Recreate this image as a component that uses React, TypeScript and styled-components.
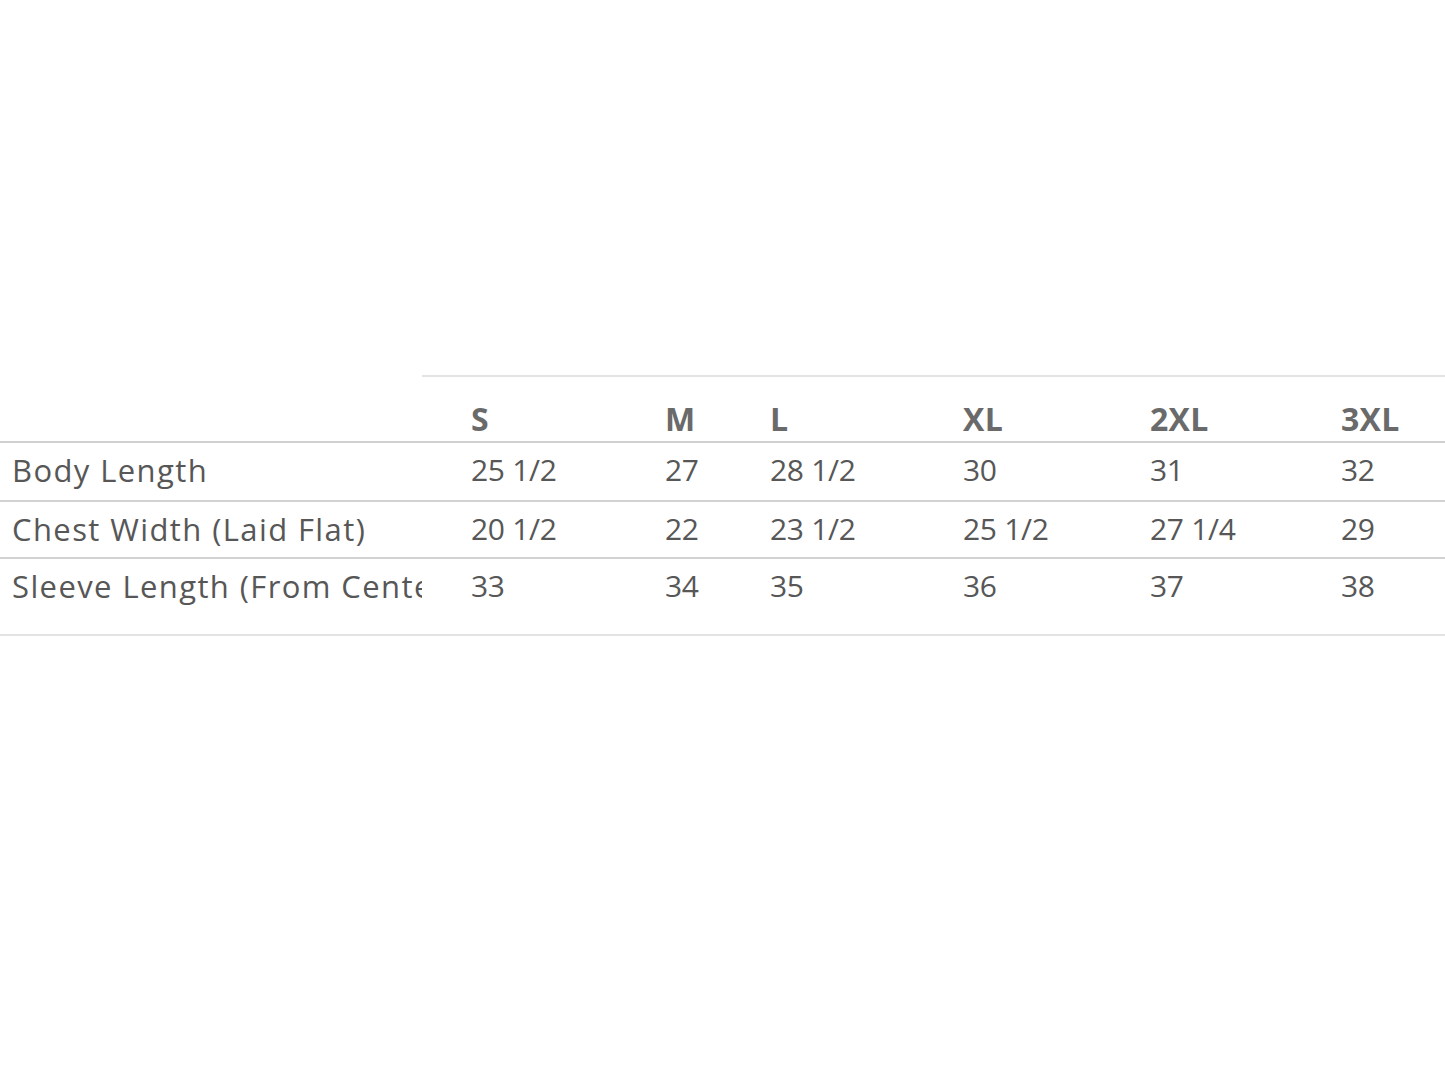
import React from "react";
import styled, { createGlobalStyle } from "styled-components";

const Global = createGlobalStyle`
  html, body { margin: 0; padding: 0; background: #ffffff; }
  body { font-family: "Open Sans", "Liberation Sans", sans-serif; }
`;

const Page = styled.main`
  width: 1445px;
  padding-top: 375px;
`;

const Table = styled.table`
  width: 1445px;
  border-collapse: collapse;
  table-layout: fixed;
  color: #575757;
`;

const HeadRow = styled.tr`
  height: 66px;
`;

const HeadCell = styled.th<{ $blank?: boolean }>`
  padding: 25px 0 0 49px;
  text-align: left;
  vertical-align: top;
  font-weight: 700;
  font-size: 32px;
  line-height: 34px;
  letter-spacing: 0.3px;
  color: #6a6a6a;
  border-top: ${(p) => (p.$blank ? "none" : "2px solid #e4e4e4")};
  border-bottom: 2px solid #d0d0d0;
`;

const Row = styled.tr<{ $h: number; $last?: boolean }>`
  height: ${(p) => p.$h}px;
  border-bottom: ${(p) => (p.$last ? "2px solid #e2e2e2" : "2px solid #d2d2d2")};
`;

const Label = styled.td`
  padding: 10px 0 0 12px;
  vertical-align: top;
  font-size: 31px;
  line-height: 34px;
  letter-spacing: 1.4px;
  white-space: nowrap;
  overflow: hidden;
`;

const Value = styled.td`
  padding: 10px 0 0 49px;
  vertical-align: top;
  font-size: 30px;
  line-height: 34px;
  letter-spacing: -0.3px;
  white-space: nowrap;
`;

const widths = [422, 194, 105, 193, 187, 191, 153];
const sizes = ["S", "M", "L", "XL", "2XL", "3XL"];
const rows: { label: string; h: number; values: string[] }[] = [
  { label: "Body Length", h: 59, values: ["25 1/2", "27", "28 1/2", "30", "31", "32"] },
  { label: "Chest Width (Laid Flat)", h: 57, values: ["20 1/2", "22", "23 1/2", "25 1/2", "27 1/4", "29"] },
  { label: "Sleeve Length (From Center Back)", h: 77, values: ["33", "34", "35", "36", "37", "38"] },
];

export default function App() {
  return (
    <Page>
      <Global />
      <Table>
        <colgroup>
          {widths.map((w, i) => (
            <col key={i} style={{ width: w }} />
          ))}
        </colgroup>
        <thead>
          <HeadRow>
            <HeadCell $blank />
            {sizes.map((s) => (
              <HeadCell key={s}>{s}</HeadCell>
            ))}
            <HeadCell />
          </HeadRow>
        </thead>
        <tbody>
          {rows.map((r, i) => (
            <Row key={r.label} $h={r.h} $last={i === rows.length - 1}>
              <Label>{r.label}</Label>
              {r.values.map((v, j) => (
                <Value key={j}>{v}</Value>
              ))}
              <Value />
            </Row>
          ))}
        </tbody>
      </Table>
    </Page>
  );
}
